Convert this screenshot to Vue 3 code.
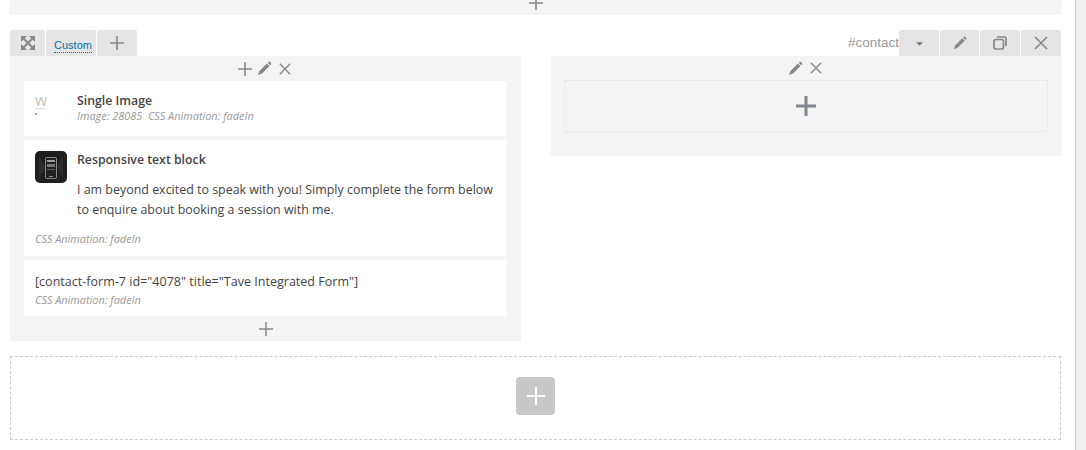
<script setup>
const leftTabs = ["expand", "custom", "plus"];
const rightTabs = ["caret", "pencil", "copy", "close"];
const phoneBars = [
    { y: 9, h: 2, fill: "#9a9a9a" },
    { y: 13, h: 3, fill: "#777" },
    { y: 18, h: 1, fill: "#5f5f5f" }
];
const pencilBody = "M9.300 2.300l2.400 2.400-7 7L.9 13.100l1.400-3.800z";
const pencilEnd = "M10.700.9a1 1 0 0 1 1.400 0l1 1a1 1 0 0 1 0 1.400l-.7.700L10 1.600z";
</script>

<template>
    <div class="page">
        <main class="builder">
            <div class="top-band">
                <svg class="icon plus-top" viewBox="0 0 16 16"><path d="M8 1v14M1 8h14" /></svg>
            </div>

            <section class="row-block">
                <div class="row-controls">
                    <div class="tabs">
                        <template v-for="tab in leftTabs" :key="tab">
                            <div v-if="tab === 'expand'" class="tab tab--move">
                                <svg class="expand" viewBox="0 0 14 14">
                                    <path d="M0 0h6L0 6zM14 0v6L8 0zM0 14V8l6 6zM14 14H8l6-6z" />
                                    <path class="expand-x" d="M2 2l10 10M12 2L2 12" />
                                </svg>
                            </div>
                            <div v-else-if="tab === 'custom'" class="tab tab--custom"><span>Custom</span></div>
                            <div v-else class="tab tab--plus">
                                <svg class="icon plus-tab" viewBox="0 0 16 16"><path d="M8 1v14M1 8h14" /></svg>
                            </div>
                        </template>
                    </div>
                    <div class="tabs tabs--right">
                        <span class="row-id">#contact</span>
                        <div v-for="tab in rightTabs" :key="tab" :class="['tab', 'tab--action', 'tab--' + tab]">
                            <svg v-if="tab === 'caret'" class="caret" viewBox="0 0 8 4"><path d="M0 0h8L4 4z" /></svg>
                            <svg v-else-if="tab === 'pencil'" class="pencil" viewBox="0 0 14 14">
                                <path :d="pencilBody" /><path :d="pencilEnd" />
                            </svg>
                            <svg v-else-if="tab === 'copy'" class="icon copy" viewBox="0 0 14 14">
                                <rect x="1" y="3.500" width="9.500" height="9.500" rx="2" />
                                <path d="M4 1h7.500A1.500 1.500 0 0 1 13 2.500V10" />
                            </svg>
                            <svg v-else class="icon close-tab" viewBox="0 0 14 14"><path d="M1 1l12 12M13 1L1 13" /></svg>
                        </div>
                    </div>
                </div>

                <div class="columns">
                    <div class="column column--left">
                        <div class="column-tools">
                            <svg class="icon tool-plus" viewBox="0 0 14 14"><path d="M7 0v14M0 7h14" /></svg>
                            <svg class="pencil tool-pencil" viewBox="0 0 14 14">
                                <path :d="pencilBody" /><path :d="pencilEnd" />
                            </svg>
                            <svg class="icon tool-close" viewBox="0 0 12 12"><path d="M.8.8l10.400 10.400M11.200.8L.8 11.200" /></svg>
                        </div>

                        <div class="cards">
                            <article class="card card--image">
                                <div class="thumb">
                                    <span class="thumb-letter">W</span>
                                    <i class="thumb-line"></i>
                                    <i class="thumb-dot"></i>
                                </div>
                                <div>
                                    <h3 class="card-title">Single Image</h3>
                                    <p class="meta">Image: 28085&nbsp; CSS Animation: fadeIn</p>
                                </div>
                            </article>

                            <article class="card card--text">
                                <div class="text-head">
                                    <svg class="phone-icon" viewBox="0 0 32 32">
                                        <rect width="32" height="32" rx="5" fill="#1e1e1e" />
                                        <path d="M4 4l6 12-6 12zM28 4l-6 12 6 12z" fill="#2d2d2d" />
                                        <rect x="10.500" y="6.500" width="11" height="21" rx="1" fill="none" stroke="#8a8a8a" />
                                        <rect v-for="bar in phoneBars" :key="bar.y" x="12" :y="bar.y" width="8" :height="bar.h" :fill="bar.fill" />
                                        <rect x="14" y="25" width="4" height="1" fill="#8a8a8a" />
                                    </svg>
                                    <div class="text-body">
                                        <h3 class="card-title">Responsive text block</h3>
                                        <p class="copy-text">I am beyond excited to speak with you! Simply complete the form below to enquire about booking a session with me.</p>
                                    </div>
                                </div>
                                <p class="meta">CSS Animation: fadeIn</p>
                            </article>

                            <article class="card card--form">
                                <p class="shortcode">[contact-form-7 id="4078" title="Tave Integrated Form"]</p>
                                <p class="meta">CSS Animation: fadeIn</p>
                            </article>
                        </div>

                        <div class="column-footer">
                            <svg class="icon footer-plus" viewBox="0 0 16 16"><path d="M8 1v14M1 8h14" /></svg>
                        </div>
                    </div>

                    <div class="column column--right">
                        <div class="column-tools">
                            <svg class="pencil tool-pencil" viewBox="0 0 14 14">
                                <path :d="pencilBody" /><path :d="pencilEnd" />
                            </svg>
                            <svg class="icon tool-close" viewBox="0 0 12 12"><path d="M.8.8l10.400 10.400M11.200.8L.8 11.200" /></svg>
                        </div>
                        <div class="empty-column">
                            <svg class="icon empty-plus" viewBox="0 0 22 22"><path d="M11 1v20M1 11h20" /></svg>
                        </div>
                    </div>
                </div>
            </section>

            <div class="add-row">
                <button class="add-btn">
                    <svg class="icon add-plus" viewBox="0 0 20 20"><path d="M10 1v18M1 10h18" /></svg>
                </button>
            </div>
        </main>
        <div class="scrollbar"></div>
    </div>
</template>

<style scoped>
.page {
    display: flex;
    width: 1086px;
    height: 450px;
    overflow: hidden;
    background: #fff;
    font-family: "Open Sans", "Noto Sans", sans-serif;
    color: #444;
}

.builder {
    flex: 1;
    padding: 0 14px 0 10px;
    min-width: 0;
}

.scrollbar {
    width: 11px;
    height: 450px;
    box-sizing: border-box;
    background: #f0f0f0;
    border-left: 1px solid #c6c6c6;
}

.icon {
    fill: none;
    stroke: #888;
    display: block;
}

.top-band {
    height: 15px;
    background: #f4f4f4;
    display: flex;
    justify-content: center;
    align-items: flex-end;
    overflow: hidden;
}

.plus-top {
    width: 16px;
    height: 16px;
    flex: none;
    margin-bottom: 4px;
    stroke-width: 1.6;
}

.row-block {
    margin-top: 15px;
}

.row-controls {
    display: flex;
    justify-content: space-between;
    height: 26px;
}

.tabs {
    display: flex;
    gap: 1px;
}

.tab {
    background: #e5e5e5;
    border-radius: 2px 2px 0 0;
    height: 26px;
    display: flex;
    align-items: center;
    justify-content: center;
}

.tab--move {
    width: 35px;
}

.tab--custom {
    width: 50px;
    padding-left: 4px;
    box-sizing: border-box;
    font-family: "Liberation Sans", Arial, sans-serif;
    font-size: 11px;
    color: #0073aa;
}

.tab--custom span {
    border-bottom: 1px dotted #0073aa;
    line-height: 13px;
    margin-top: 6px;
}

.tab--plus {
    width: 40px;
}

.plus-tab {
    width: 16px;
    height: 16px;
    stroke-width: 1.6;
}

.expand {
    width: 14px;
    height: 14px;
    fill: #888;
}

.expand-x {
    fill: none;
    stroke: #888;
    stroke-width: 2;
}

.tabs--right {
    align-items: center;
}

.row-id {
    font-family: "Liberation Sans", Arial, sans-serif;
    font-size: 13.500px;
    color: #999;
    margin-top: -2px;
    margin-right: -1px;
}

.tab--action {
    width: 40px;
}

.tab--pencil {
    width: 39px;
}

.caret {
    width: 7px;
    height: 4px;
    fill: #777;
    margin-top: 2px;
}

.pencil {
    width: 14px;
    height: 14px;
    fill: #888;
}

.copy {
    width: 14px;
    height: 14px;
    stroke-width: 1.7;
}

.close-tab {
    width: 14px;
    height: 14px;
    stroke-width: 1.6;
}

.columns {
    display: grid;
    grid-template-columns: 511px 510px;
    column-gap: 30px;
    align-items: start;
}

.column {
    background: #f4f4f4;
}

.column--left {
    padding: 0 14px;
    height: 285px;
    box-sizing: border-box;
}

.column--right {
    height: 100px;
    padding: 0 13px;
    box-sizing: border-box;
}

.column-tools {
    height: 24px;
    display: flex;
    align-items: center;
    justify-content: center;
    gap: 6px;
    padding-right: 2px;
}

.column--left .column-tools {
    height: 25px;
}

.tool-plus {
    width: 14px;
    height: 14px;
    stroke-width: 1.6;
}

.tool-pencil {
    width: 15px;
    height: 15px;
    margin: 0 1px 0 -1px;
}

.tool-close {
    width: 12px;
    height: 12px;
    stroke-width: 1.4;
}

.cards {
    display: flex;
    flex-direction: column;
    gap: 4px;
}

.card {
    background: #fff;
    box-sizing: border-box;
}

.card--image {
    height: 55px;
    padding: 13px 11px 0;
    display: flex;
    gap: 30px;
}

.thumb {
    width: 12px;
    display: flex;
    flex-direction: column;
    padding-top: 1px;
}

.thumb-letter {
    font-size: 13px;
    line-height: 13px;
    color: #c4bdb3;
}

.thumb-line {
    width: 11px;
    height: 1px;
    background: #e0dcd6;
}

.thumb-dot {
    width: 2px;
    height: 2px;
    margin-top: 4px;
    background: #aaa;
}

.card-title {
    margin: 0;
    font-size: 12.300px;
    line-height: 14px;
    font-weight: 600;
    color: #444;
}

.meta {
    margin: 0;
    font-size: 10.900px;
    line-height: 15px;
    font-style: italic;
    color: #999;
}

.card--text {
    height: 116px;
    padding: 11px 0 0 11px;
}

.text-head {
    display: flex;
    gap: 10px;
    height: 80px;
}

.phone-icon {
    width: 32px;
    height: 32px;
    flex: none;
}

.text-body {
    padding-top: 2px;
}

.copy-text {
    margin: 13px 0 0;
    max-width: 416px;
    font-size: 12.450px;
    line-height: 20px;
    color: #444;
}

.card--form {
    height: 56px;
    padding: 14px 11px 0;
}

.shortcode {
    margin: 0 0 2px;
    font-size: 12.550px;
    line-height: 16px;
    color: #444;
}

.column-footer {
    height: 25px;
    display: flex;
    align-items: center;
    justify-content: center;
}

.footer-plus {
    width: 16px;
    height: 16px;
    stroke-width: 1.5;
}

.empty-column {
    height: 52px;
    box-sizing: border-box;
    border: 1px dotted #e2e2e2;
    display: flex;
    align-items: center;
    justify-content: center;
}

.empty-plus {
    width: 22px;
    height: 22px;
    stroke: #80868c;
    stroke-width: 3;
}

.add-row {
    margin-top: 15px;
    height: 84px;
    box-sizing: border-box;
    padding-top: 20px;
    border: 1px dashed #ccc;
    display: flex;
    align-items: flex-start;
    justify-content: center;
}

.add-btn {
    width: 39px;
    height: 38px;
    padding: 0;
    border: 0;
    border-radius: 4px;
    background: #c8c8c8;
    display: flex;
    align-items: center;
    justify-content: center;
}

.add-plus {
    width: 20px;
    height: 20px;
    stroke: #fff;
    stroke-width: 2;
}
</style>
